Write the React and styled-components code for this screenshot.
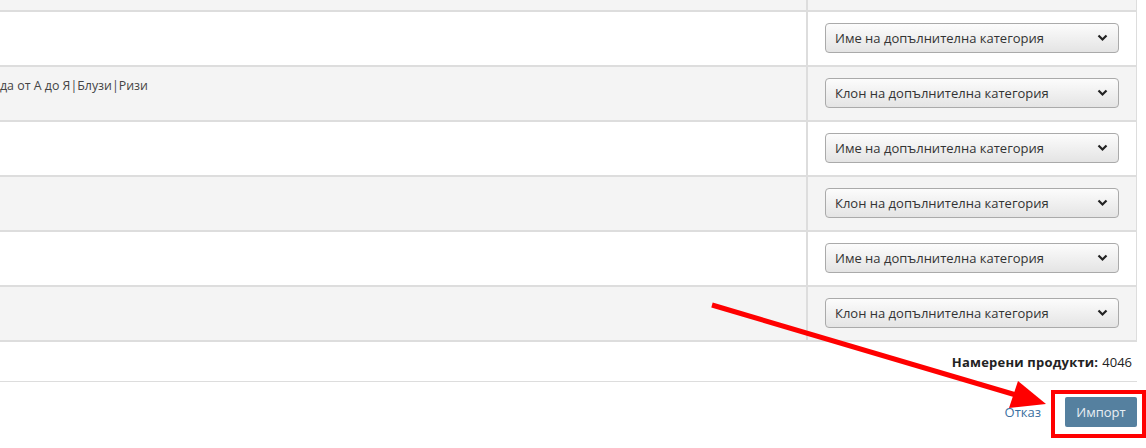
import React from 'react';
import styled, { createGlobalStyle } from 'styled-components';

const GlobalStyle = createGlobalStyle`
  body {
    margin: 0;
    background: #ffffff;
    font-family: "Open Sans", "Noto Sans", sans-serif;
    color: #333333;
  }
`;

const Page = styled.div`
  position: relative;
  width: 1146px;
  height: 448px;
  overflow: hidden;
`;

const Table = styled.div`
  width: 1137px;
  border-right: 1px solid #dddddd;
  box-sizing: border-box;
`;

const Row = styled.div`
  display: grid;
  grid-template-columns: 808px 1fr;
  height: ${(p) => p.$height || 55}px;
  background: ${(p) => (p.$odd ? '#f4f4f4' : '#ffffff')};
  border-bottom: 2px solid #dddddd;
  box-sizing: border-box;
`;

const TextCell = styled.div`
  border-right: 2px solid #dddddd;
  padding-top: 10px;
  font-size: 12.4px;
  line-height: 18px;
  color: #444444;
  white-space: nowrap;
  overflow: hidden;
`;

const SelectCell = styled.div`
  display: flex;
  align-items: center;
  padding: 0 17px 2px 17px;
`;

const Select = styled.div`
  flex: 1;
  height: 30px;
  display: flex;
  align-items: center;
  justify-content: space-between;
  padding: 0 10px 0 9px;
  border: 1px solid #aaaaaa;
  border-radius: 4px;
  background: linear-gradient(#fcfcfc, #e4e4e4);
  box-sizing: border-box;
  font-size: 13px;
  color: #333333;
`;

const Footer = styled.div`
  width: 1137px;
  height: 40px;
  display: flex;
  align-items: center;
  justify-content: flex-end;
  padding-right: 5px;
  box-sizing: border-box;
  border-bottom: 1px solid #dddddd;
  font-size: 13px;
  color: #222222;
`;

const Label = styled.b`
  font-weight: 700;
  letter-spacing: 0.2px;
  margin-right: 4px;
`;

const Actions = styled.div`
  width: 1137px;
  display: flex;
  justify-content: flex-end;
  align-items: center;
  gap: 24px;
  padding-top: 15px;
`;

const CancelLink = styled.a`
  font-size: 13px;
  color: #3a6f9f;
  text-decoration: none;
`;

const Highlight = styled.div`
  position: absolute;
  left: 1051px;
  top: 390px;
  width: 95px;
  height: 48px;
  border: 4px solid #ff0000;
  box-sizing: border-box;
  pointer-events: none;
`;

const ImportButton = styled.button`
  width: 72px;
  height: 30px;
  border: none;
  border-radius: 2px;
  background: #55809f;
  color: #e9eff4;
  font-family: "Open Sans", sans-serif;
  font-size: 13px;
  padding: 0;
`;

const Overlay = styled.svg`
  position: absolute;
  left: 0;
  top: 0;
  pointer-events: none;
`;

const Chevron = () => (
  <svg width="11" height="8" viewBox="0 0 11 8">
    <path d="M1.5 1.5 L5.5 5.5 L9.5 1.5" fill="none" stroke="#222" strokeWidth="2.2" />
  </svg>
);

const rows = [
  { text: '', select: 'Име на допълнителна категория' },
  { text: 'да от А до Я|Блузи|Ризи', select: 'Клон на допълнителна категория' },
  { text: '', select: 'Име на допълнителна категория' },
  { text: '', select: 'Клон на допълнителна категория' },
  { text: '', select: 'Име на допълнителна категория' },
  { text: '', select: 'Клон на допълнителна категория' },
];

export default function App() {
  return (
    <Page>
      <GlobalStyle />
      <Table>
        <Row $odd $height={12}>
          <TextCell />
          <div />
        </Row>
        {rows.map((row, i) => (
          <Row key={i} $odd={i % 2 === 1}>
            <TextCell>{row.text}</TextCell>
            <SelectCell>
              <Select>
                <span>{row.select}</span>
                <Chevron />
              </Select>
            </SelectCell>
          </Row>
        ))}
      </Table>
      <Footer>
        <Label>Намерени продукти:</Label> 4046
      </Footer>
      <Actions>
        <CancelLink href="#">Отказ</CancelLink>
        <ImportButton>Импорт</ImportButton>
      </Actions>
      <Highlight />
      <Overlay width="1146" height="448">
        <line x1="712" y1="305" x2="1016" y2="395" stroke="#ff0000" strokeWidth="5" />
        <polygon points="1046,404 1009,408 1018,381" fill="#ff0000" />
      </Overlay>
    </Page>
  );
}
